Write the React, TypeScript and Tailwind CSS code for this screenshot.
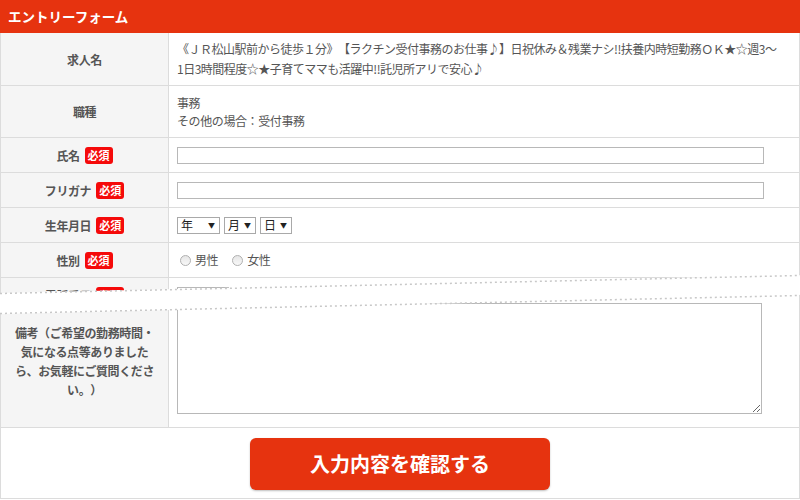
import type { ReactNode } from 'react'

const font = "font-['Noto_Sans_CJK_JP','Noto_Sans',sans-serif] [text-spacing-trim:space-all]"

function Required() {
  return (
    <span className="ml-[5px] inline-flex h-[17px] shrink-0 items-center rounded-[3px] bg-[#f50a0a] px-[3px] text-[11px] font-bold leading-none tracking-normal text-white">
      必須
    </span>
  )
}

function Row({
  label,
  required,
  height,
  children,
}: {
  label: ReactNode
  required?: boolean
  height: string
  children?: ReactNode
}) {
  return (
    <div className={`flex border-b border-[#dcdcdc] ${height}`}>
      <div className="flex w-[168px] shrink-0 items-center justify-center border-r border-[#dcdcdc] bg-[#f5f5f5] px-[12px] text-center text-[12px] font-bold leading-[19px] tracking-[-0.4px] text-[#555]">
        <span>{label}</span>
        {required && <Required />}
      </div>
      <div className="flex flex-1 items-center px-2 text-[12px] tracking-[-0.4px] text-[#555]">{children}</div>
    </div>
  )
}

function TextBox({ width = 'w-[587px]' }: { width?: string }) {
  return <div className={`h-[17px] border border-[#b8b8b8] bg-white ${width}`} />
}

function FakeSelect({ label, width }: { label: string; width: string }) {
  return (
    <div
      className={`flex h-[17px] items-center justify-between border border-[#a9a9a9] bg-white pl-[3px] pr-[4px] text-[12px] leading-none text-[#222] ${width}`}
    >
      <span>{label}</span>
      <span className="text-[7px]">▼</span>
    </div>
  )
}

function Radio({ label }: { label: string }) {
  return (
    <label className="mr-[14px] flex items-center gap-[4px]">
      <span className="h-[11px] w-[11px] rounded-full border border-[#b0b0b0] bg-gradient-to-b from-[#e6e6e6] to-[#f8f8f8]" />
      <span>{label}</span>
    </label>
  )
}

export default function App() {
  return (
    <div className={`relative h-[500px] w-[800px] overflow-hidden bg-white ${font}`}>
      <div className="flex h-[33px] items-center bg-[#e6330f] px-2 text-[13.5px] font-bold text-white">
        エントリーフォーム
      </div>

      <div className="border-x border-[#dcdcdc]">
        <Row label="求人名" height="h-[53px]">
          <p className="max-w-[604px] leading-[20px] tracking-[-0.5px]">
            《ＪＲ松山駅前から徒歩１分》【ラクチン受付事務のお仕事♪】日祝休み＆残業ナシ!!扶養内時短勤務ＯＫ★☆週3～1日3時間程度☆★子育てママも活躍中!!託児所アリで安心♪
          </p>
        </Row>
        <Row label="職種" height="h-[52px]">
          <p className="leading-[18px]">
            事務
            <br />
            その他の場合：受付事務
          </p>
        </Row>
        <Row label="氏名" required height="h-[35px]">
          <TextBox />
        </Row>
        <Row label="フリガナ" required height="h-[35px]">
          <TextBox />
        </Row>
        <Row label="生年月日" required height="h-[35px]">
          <div className="flex gap-[4px] tracking-normal">
            <FakeSelect label="年" width="w-[43px]" />
            <FakeSelect label="月" width="w-[32px]" />
            <FakeSelect label="日" width="w-[32px]" />
          </div>
        </Row>
        <Row label="性別" required height="h-[35px]">
          <div className="flex pl-[3px]">
            <Radio label="男性" />
            <Radio label="女性" />
          </div>
        </Row>
        <div className="h-[17px] overflow-hidden">
          <Row label="電話番号" required height="h-[35px]">
            <TextBox width="w-[52px]" />
          </Row>
        </div>
        <Row
          label="備考（ご希望の勤務時間・気になる点等ありましたら、お気軽にご質問ください。）"
          height="h-[133px] !items-stretch"
        >
          <div className="flex h-full w-full items-start pt-[8px]">
            <textarea className="h-[111px] w-[585px] resize border border-[#b8b8b8] bg-white outline-none" />
          </div>
        </Row>
        <div className="flex h-[71px] justify-center border-b border-[#dcdcdc] pt-[10px]">
          <button className="h-[52px] w-[300px] rounded-[6px] bg-[#e6330f] text-[20px] font-bold text-white shadow-[0_1px_2px_rgba(0,0,0,0.25)]">
            入力内容を確認する
          </button>
        </div>
      </div>

      {/* torn cut between rows */}
      <svg className="absolute left-0 top-[270px]" width="800" height="50" viewBox="0 0 800 50">
        <polygon points="0,23 800,5 800,25 0,44" fill="#fff" />
        <line x1="0" y1="23.5" x2="800" y2="5.5" stroke="#c8c8c8" strokeWidth="1.5" strokeDasharray="2 3" />
        <line x1="0" y1="43.5" x2="800" y2="25.5" stroke="#c8c8c8" strokeWidth="1.5" strokeDasharray="2 3" />
      </svg>
    </div>
  )
}
